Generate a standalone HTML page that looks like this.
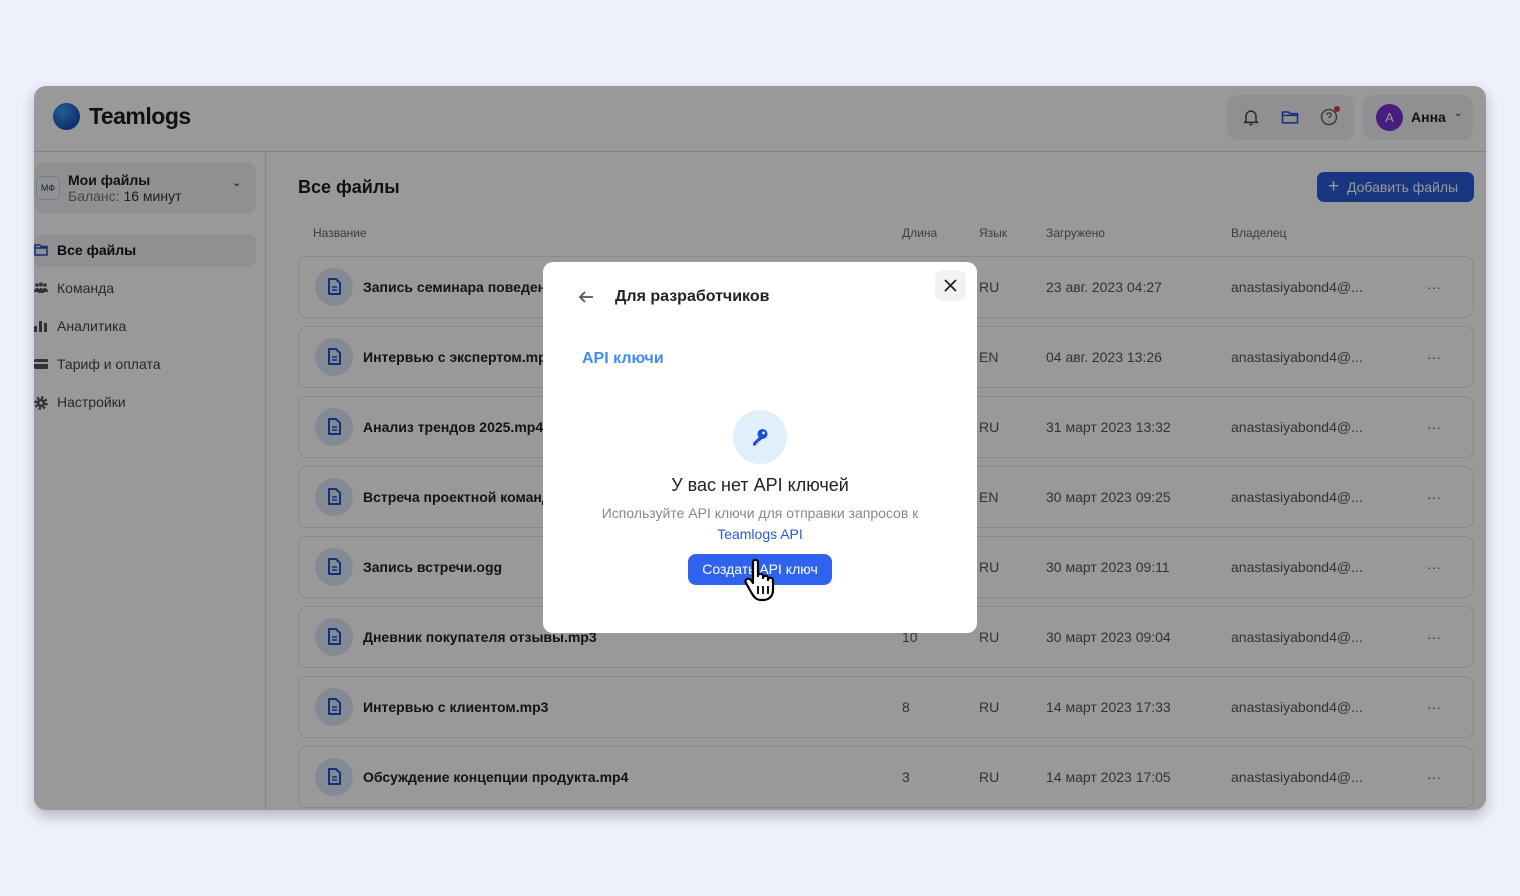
<!DOCTYPE html>
<html><head><meta charset="utf-8"><style>
*{box-sizing:border-box;margin:0;padding:0}
body{width:1520px;height:896px;background:#eef1fb;font-family:"Liberation Sans","Noto Sans CJK SC",sans-serif;position:relative;overflow:hidden;color:#1d1d1f}
.app{position:absolute;left:34px;top:86px;width:1452px;height:724px;background:#fff;border-radius:12px;overflow:hidden;box-shadow:0 6px 14px rgba(0,0,0,.25)}
.hdr{position:absolute;left:0;top:0;right:0;height:66px;border-bottom:1px solid #ddd}
.logo{position:absolute;left:19px;top:17px;width:27px;height:27px;border-radius:50%;background:radial-gradient(circle at 35% 30%,#3a9ef0,#1a4fc0 70%)}
.brand{position:absolute;left:55px;top:17px;font-size:23px;font-weight:bold;letter-spacing:-.5px}
.ibox{position:absolute;left:1193px;top:9px;width:127px;height:45px;background:#f1f1f3;border-radius:10px}
.ubox{position:absolute;left:1329px;top:9px;width:110px;height:45px;background:#f1f1f3;border-radius:10px}
.av{position:absolute;left:13px;top:9px;width:27px;height:27px;border-radius:50%;background:#7a2fd6;color:#fff;font-size:13px;text-align:center;line-height:27px}
.side{position:absolute;left:0;top:66px;width:232px;bottom:0;border-right:1px solid #ddd}
.acc{position:absolute;left:0;top:10px;width:222px;height:52px;background:#f1f1f3;border-radius:10px}
.mf{position:absolute;left:2px;top:14px;width:24px;height:24px;border:1px solid #c9d3e3;border-radius:5px;background:#eef3fb;font-size:9px;text-align:center;line-height:22px;color:#333}
.nav{position:absolute;left:0;font-size:14px;color:#444;width:222px;height:33px;line-height:33px;padding-left:23px;border-radius:8px}
.nav svg{position:absolute;left:0;top:10px}
.main{position:absolute;left:233px;top:66px;right:0;bottom:0}
.btn{position:absolute;left:1050px;top:20px;width:157px;height:30px;background:#2a5bd7;border-radius:7px;color:#fff;font-size:14px;line-height:30px;padding-left:30px}
.th{position:absolute;top:74px;font-size:12px;color:#666}
.row{position:absolute;left:31px;width:1176px;height:62px;border:1px solid #e5e5e5;border-radius:9px;font-size:14px}
.row span{position:absolute;top:22px;color:#555}
.fi{position:absolute;left:16px;top:11px;width:38px;height:38px;border-radius:50%;background:#dbe7f7}
.fi svg{position:absolute;left:12px;top:10px}
.nm{position:absolute;left:64px;top:22px;font-weight:bold;color:#222}
.ov{position:absolute;inset:0;background:rgba(0,0,0,.4)}
.modal{position:absolute;left:543px;top:262px;width:434px;height:371px;background:#fff;border-radius:10px}
</style></head><body>
<svg width="0" height="0" style="position:absolute"><defs><g id="doc"><path d="M2 1h7l4 4v11H2z" fill="none" stroke="#1d4fd1" stroke-width="2" stroke-linejoin="round"/><path d="M5 9h5M5 12h5" stroke="#1d4fd1" stroke-width="1.6"/></g></defs></svg>
<div class="app">
<div class="hdr"><div class="logo"></div><div class="brand">Teamlogs</div>
<div class="ibox">
<svg style="position:absolute;left:14px;top:12px" width="20" height="20" viewBox="0 0 24 24" fill="none" stroke="#444" stroke-width="1.8"><path d="M6 17V11a6 6 0 0112 0v6l1.5 1.5h-15zM10 21h4"/></svg>
<svg style="position:absolute;left:53px;top:12px" width="20" height="20" viewBox="0 0 24 24" fill="none" stroke="#1d4fd1" stroke-width="1.8"><path d="M3 6h7l2 2h9v11H3zM3 10h18"/></svg>
<svg style="position:absolute;left:92px;top:12px" width="20" height="20" viewBox="0 0 24 24" fill="none" stroke="#666" stroke-width="1.8"><circle cx="12" cy="12" r="9"/><path d="M9.5 9.5a2.5 2.5 0 115 0c0 2-2.5 2-2.5 4M12 17v.5"/></svg>
<div style="position:absolute;left:107px;top:11px;width:6px;height:6px;border-radius:50%;background:#e53935"></div>
</div>
<div class="ubox"><div class="av">A</div><div style="position:absolute;left:48px;top:14px;font-size:14px;font-weight:bold">Анна</div><div style="position:absolute;left:91px;top:13px;font-size:10px">⌄</div></div>
</div>
<div class="side">
<div class="acc"><div class="mf">МФ</div><div style="position:absolute;left:34px;top:10px;font-size:14px;font-weight:bold;line-height:16px">Мои файлы</div><div style="position:absolute;left:34px;top:26px;font-size:14px;color:#777;line-height:16px">Баланс: <b style="font-weight:normal;color:#333">16 минут</b></div><div style="position:absolute;left:198px;top:14px;font-size:11px">⌄</div></div>
<div class="nav" style="top:82px;background:#f1f1f3;color:#111;font-weight:bold"><svg width="14" height="12" viewBox="0 0 14 12" fill="none" stroke="#1d4fd1" stroke-width="1.5"><path d="M1 1h5l1 1.5h6V11H1zM1 4h12"/></svg>Все файлы</div>
<div class="nav" style="top:120px"><svg width="14" height="12" viewBox="0 0 14 12" fill="#555"><circle cx="3" cy="3" r="1.8"/><circle cx="7" cy="2.5" r="2"/><circle cx="11" cy="3" r="1.8"/><path d="M0 10c0-3 2-4 3-4s3 1 3 4zM4 11c0-4 2-5 3-5s3 1 3 5zM8 10c0-3 2-4 3-4s3 1 3 4z"/></svg>Команда</div>
<div class="nav" style="top:158px"><svg width="14" height="12" viewBox="0 0 14 12" fill="#555"><rect x="0" y="6" width="3" height="6"/><rect x="5" y="1" width="3" height="11"/><rect x="10" y="3" width="3" height="9"/></svg>Аналитика</div>
<div class="nav" style="top:196px"><svg width="14" height="12" viewBox="0 0 14 12"><rect x="0" y="1" width="14" height="10" rx="1.5" fill="#555"/><rect x="0" y="4" width="14" height="2" fill="#fff"/></svg>Тариф и оплата</div>
<div class="nav" style="top:234px"><svg width="14" height="14" viewBox="0 0 14 14"><circle cx="7" cy="7" r="5" fill="none" stroke="#555" stroke-width="3.5" stroke-dasharray="2.2 1.7"/><circle cx="7" cy="7" r="4" fill="#555"/><circle cx="7" cy="7" r="1.6" fill="#fff"/></svg>Настройки</div>
</div>
<div class="main">
<div style="position:absolute;left:31px;top:25px;font-size:18px;font-weight:bold">Все файлы</div>
<div class="btn"><span style="position:absolute;left:11px;font-size:19px">+</span>Добавить файлы</div>
<div class="th" style="left:46px">Название</div><div class="th" style="left:635px">Длина</div><div class="th" style="left:712px">Язык</div><div class="th" style="left:779px">Загружено</div><div class="th" style="left:964px">Владелец</div>
<div class="row" style="top:104px"><div class="fi"><svg width="15" height="18"><use href="#doc"/></svg></div><div class="nm">Запись семинара поведенческой экономики.mp4</div><span style="left:680px">RU</span><span style="left:747px">23 авг. 2023 04:27</span><span style="left:932px">anastasiyabond4@...</span><span style="left:1128px">···</span></div>
<div class="row" style="top:174px"><div class="fi"><svg width="15" height="18"><use href="#doc"/></svg></div><div class="nm">Интервью с экспертом.mp3</div><span style="left:680px">EN</span><span style="left:747px">04 авг. 2023 13:26</span><span style="left:932px">anastasiyabond4@...</span><span style="left:1128px">···</span></div>
<div class="row" style="top:244px"><div class="fi"><svg width="15" height="18"><use href="#doc"/></svg></div><div class="nm">Анализ трендов 2025.mp4</div><span style="left:680px">RU</span><span style="left:747px">31 март 2023 13:32</span><span style="left:932px">anastasiyabond4@...</span><span style="left:1128px">···</span></div>
<div class="row" style="top:314px"><div class="fi"><svg width="15" height="18"><use href="#doc"/></svg></div><div class="nm">Встреча проектной команды.mp4</div><span style="left:680px">EN</span><span style="left:747px">30 март 2023 09:25</span><span style="left:932px">anastasiyabond4@...</span><span style="left:1128px">···</span></div>
<div class="row" style="top:384px"><div class="fi"><svg width="15" height="18"><use href="#doc"/></svg></div><div class="nm">Запись встречи.ogg</div><span style="left:680px">RU</span><span style="left:747px">30 март 2023 09:11</span><span style="left:932px">anastasiyabond4@...</span><span style="left:1128px">···</span></div>
<div class="row" style="top:454px"><div class="fi"><svg width="15" height="18"><use href="#doc"/></svg></div><div class="nm">Дневник покупателя отзывы.mp3</div><span style="left:603px">10</span><span style="left:680px">RU</span><span style="left:747px">30 март 2023 09:04</span><span style="left:932px">anastasiyabond4@...</span><span style="left:1128px">···</span></div>
<div class="row" style="top:524px"><div class="fi"><svg width="15" height="18"><use href="#doc"/></svg></div><div class="nm">Интервью с клиентом.mp3</div><span style="left:603px">8</span><span style="left:680px">RU</span><span style="left:747px">14 март 2023 17:33</span><span style="left:932px">anastasiyabond4@...</span><span style="left:1128px">···</span></div>
<div class="row" style="top:594px"><div class="fi"><svg width="15" height="18"><use href="#doc"/></svg></div><div class="nm">Обсуждение концепции продукта.mp4</div><span style="left:603px">3</span><span style="left:680px">RU</span><span style="left:747px">14 март 2023 17:05</span><span style="left:932px">anastasiyabond4@...</span><span style="left:1128px">···</span></div>
</div>
<div class="ov"></div>
</div>
<div class="modal">
<svg style="position:absolute;left:34px;top:27px" width="18" height="16" viewBox="0 0 18 16" fill="none" stroke="#555" stroke-width="1.8"><path d="M16 8H3M8 3L3 8l5 5"/></svg>
<div style="position:absolute;left:72px;top:26px;font-size:16px;font-weight:bold;color:#222">Для разработчиков</div>
<div style="position:absolute;left:392px;top:8px;width:31px;height:31px;background:#f2f2f4;border-radius:8px"><svg style="position:absolute;left:9px;top:9px" width="13" height="13" viewBox="0 0 13 13" stroke="#222" stroke-width="1.8"><path d="M1 1l11 11M12 1L1 12"/></svg></div>
<div style="position:absolute;left:39px;top:88px;font-size:16px;font-weight:bold;color:#3f8ef0">API ключи</div>
<div style="position:absolute;left:190px;top:148px;width:54px;height:54px;border-radius:50%;background:#e1eefc"><svg style="position:absolute;left:17px;top:17px" width="20" height="20" viewBox="0 0 20 20"><circle cx="12.5" cy="7" r="5" fill="#1d4fd1"/><circle cx="13.5" cy="6" r="1.4" fill="#e1eefc"/><path d="M10 9l-7 7 0 2.5 2.5 0 1-1-0.5-1.5 1.5 0.5 1-1-0.5-1.5 1.5 0.5 3-3z" fill="#1d4fd1"/></svg></div>
<div style="position:absolute;left:0;width:434px;top:213px;text-align:center;font-size:18px;color:#222">У вас нет API ключей</div>
<div style="position:absolute;left:0;width:434px;top:243px;text-align:center;font-size:14px;color:#888">Используйте API ключи для отправки запросов к</div>
<div style="position:absolute;left:0;width:434px;top:264px;text-align:center;font-size:14px;color:#2a5bd7">Teamlogs API</div>
<div style="position:absolute;left:145px;top:292px;width:144px;height:31px;background:#2f63ef;border-radius:8px;color:#fff;font-size:14px;text-align:center;line-height:31px">Создать API ключ</div>
<svg style="position:absolute;left:200px;top:296px" width="38" height="44" viewBox="0 0 38 44"><path d="M10 4c0-3 5-3 5 0v14c0-3 5-3 5 0v2c0-3 5-3 5 0v2c0-3 5-3 5 0v10c0 6-4 10-10 10h-2c-5 0-7-3-10-8L3 25c-2-3 2-6 5-3l2 3z" fill="#fff" stroke="#000" stroke-width="2.2" stroke-linejoin="round"/><path d="M15 28v8M20 28v8M25 28v8" stroke="#000" stroke-width="1.8"/></svg>
</div>
</body></html>
